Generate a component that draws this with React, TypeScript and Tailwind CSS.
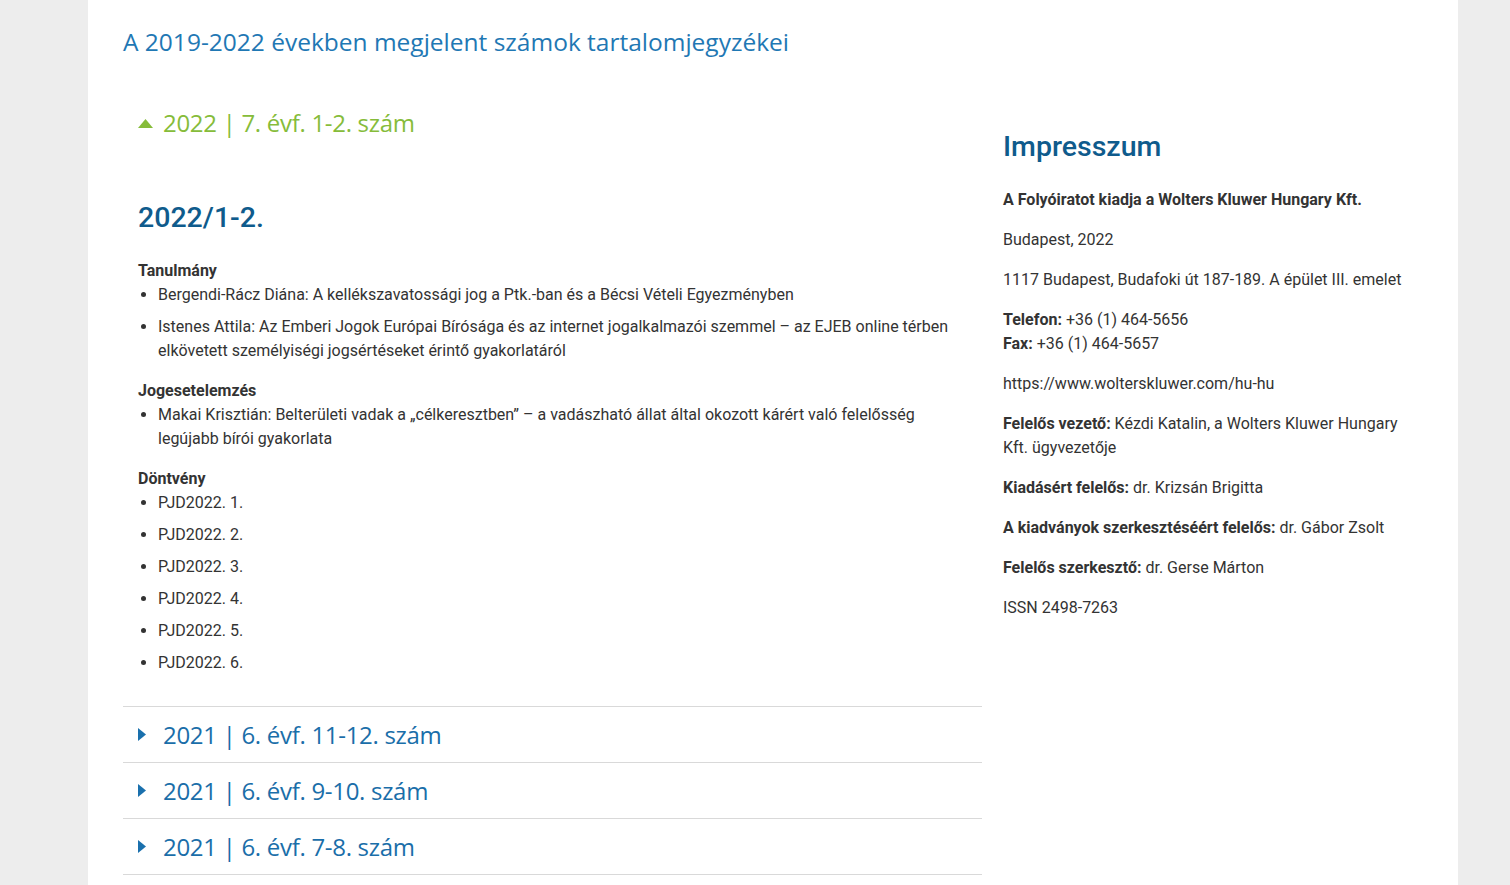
import React from 'react';

const heading = "font-['Open_Sans',sans-serif]";

const sections = [
  {
    title: 'Tanulmány',
    items: [
      'Bergendi-Rácz Diána: A kellékszavatossági jog a Ptk.-ban és a Bécsi Vételi Egyezményben',
      'Istenes Attila: Az Emberi Jogok Európai Bírósága és az internet jogalkalmazói szemmel – az EJEB online térben elkövetett személyiségi jogsértéseket érintő gyakorlatáról',
    ],
  },
  {
    title: 'Jogesetelemzés',
    items: [
      'Makai Krisztián: Belterületi vadak a „célkeresztben” – a vadászható állat által okozott kárért való felelősség legújabb bírói gyakorlata',
    ],
  },
  {
    title: 'Döntvény',
    items: ['PJD2022. 1.', 'PJD2022. 2.', 'PJD2022. 3.', 'PJD2022. 4.', 'PJD2022. 5.', 'PJD2022. 6.'],
  },
];

const collapsed = ['2021 | 6. évf. 11-12. szám', '2021 | 6. évf. 9-10. szám', '2021 | 6. évf. 7-8. szám'];

export default function App() {
  return (
    <div className="min-h-screen bg-[#ededed] font-['Roboto',sans-serif] text-[16px] text-[#333]">
      <div className="ml-[88px] w-[1370px] min-h-[885px] bg-white pl-[35px] pr-[35px] pt-[22px]">
        <h1 className={`${heading} text-[24.5px] leading-[40px] text-[#1f78b4]`}>
          A 2019-2022 években megjelent számok tartalomjegyzékei
        </h1>

        <div className="mt-[33px] flex gap-[21px]">
          {/* accordion */}
          <div className="w-[859px]">
            <div>
              <div className="flex h-[56px] items-center pl-[15px]">
                <svg width="15" height="9" viewBox="0 0 15 9" className="mr-[10px]">
                  <path d="M0 9 L7.5 0 L15 9 Z" fill="#86bc3a" />
                </svg>
                <span className={`${heading} text-[24px] tracking-[-0.3px] text-[#86bc3a]`}>
                  2022 | 7. évf. 1-2. szám
                </span>
              </div>
              <div className="pl-[15px] pr-[25px] pb-[31px]">
                <h2 className="mt-[49px] text-[28.5px] font-medium leading-[36px] text-[#0f5b8c]">2022/1-2.</h2>
                <div className="mt-[23px]">
                  {sections.map((s, i) => (
                    <div key={s.title} className={i > 0 ? 'mt-[16px]' : ''}>
                      <div className="font-bold leading-[24px]">{s.title}</div>
                      <ul className="list-disc pl-[20px]">
                        {s.items.map((it, j) => (
                          <li key={it} className={`leading-[24px] ${j > 0 ? 'mt-[8px]' : ''}`}>
                            {it}
                          </li>
                        ))}
                      </ul>
                    </div>
                  ))}
                </div>
              </div>
            </div>
            {collapsed.map((c, i) => (
              <div
                key={c}
                className={`flex items-center border-t border-[#d9d9d9] pl-[15px] ${
                  i === collapsed.length - 1 ? 'h-[57px] border-b' : 'h-[56px]'
                }`}
              >
                <svg width="8" height="13" viewBox="0 0 8 13" className="mr-[17px]">
                  <path d="M0 0 L8 6.5 L0 13 Z" fill="#1a70ad" />
                </svg>
                <span className={`${heading} text-[24px] tracking-[-0.3px] text-[#1a6ea9]`}>{c}</span>
              </div>
            ))}
          </div>

          {/* impresszum */}
          <div className="flex-1">
            <h2 className="mt-[34px] text-[28.5px] font-medium leading-[36px] text-[#0f5b8c]">Impresszum</h2>
            <div className="mt-[23px] flex flex-col gap-[16px] leading-[24px]">
              <p className="font-bold">A Folyóiratot kiadja a Wolters Kluwer Hungary Kft.</p>
              <p>Budapest, 2022</p>
              <p>1117 Budapest, Budafoki út 187-189. A épület III. emelet</p>
              <p>
                <b>Telefon:</b> +36 (1) 464-5656
                <br />
                <b>Fax:</b> +36 (1) 464-5657
              </p>
              <p>https://www.wolterskluwer.com/hu-hu</p>
              <p className="pr-[20px]">
                <b>Felelős vezető:</b> Kézdi Katalin, a Wolters Kluwer Hungary Kft. ügyvezetője
              </p>
              <p>
                <b>Kiadásért felelős:</b> dr. Krizsán Brigitta
              </p>
              <p>
                <b>A kiadványok szerkesztéséért felelős:</b> dr. Gábor Zsolt
              </p>
              <p>
                <b>Felelős szerkesztő:</b> dr. Gerse Márton
              </p>
              <p>ISSN 2498-7263</p>
            </div>
          </div>
        </div>
      </div>
    </div>
  );
}
